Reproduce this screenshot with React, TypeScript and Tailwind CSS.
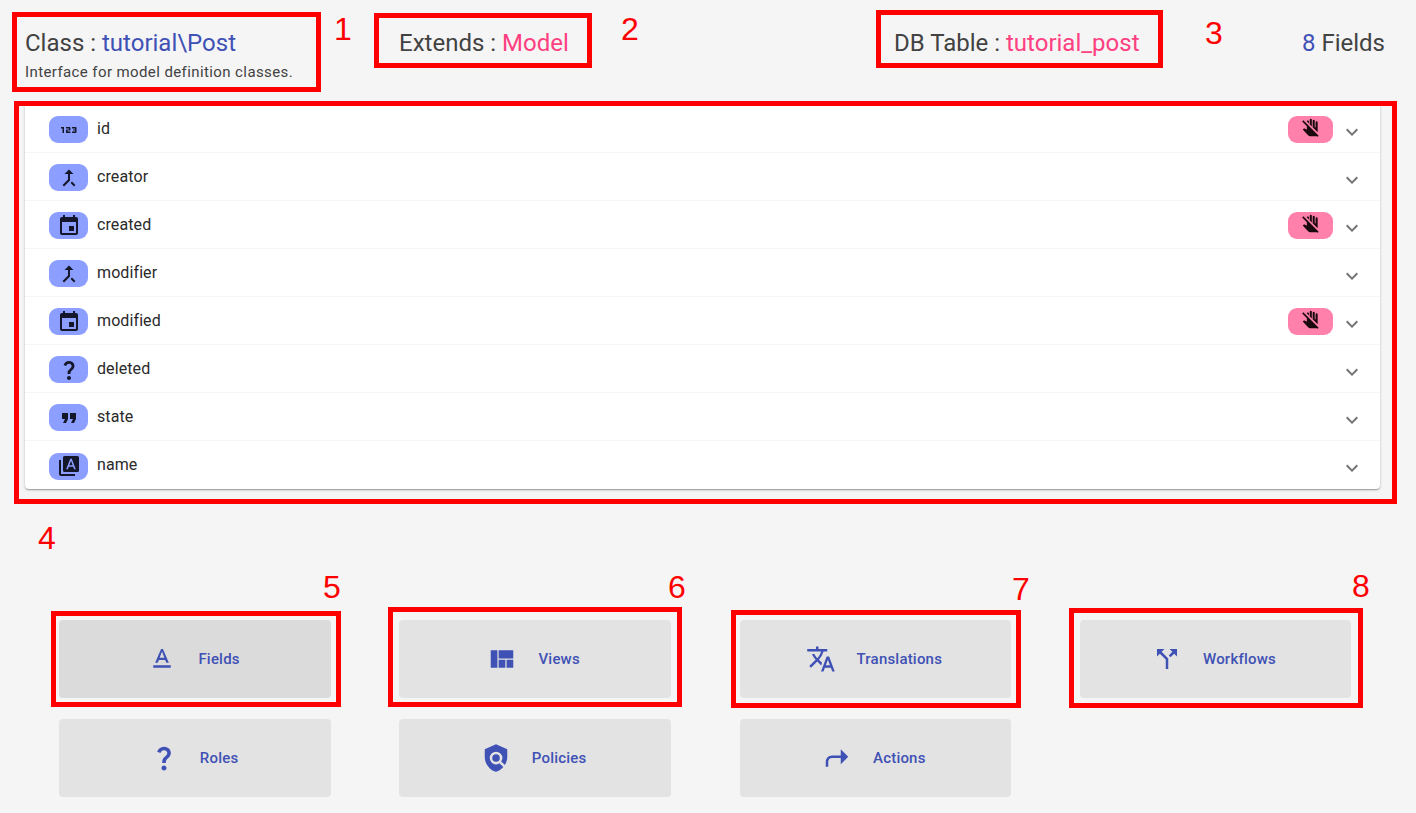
import type { ComponentType } from 'react'
import {
  Md123,
  MdCallMerge,
  MdCallSplit,
  MdDoNotTouch,
  MdEvent,
  MdFormatQuote,
  MdKeyboardArrowDown,
  MdPolicy,
  MdQuestionMark,
  MdShortcut,
  MdTextFormat,
  MdTranslate,
  MdViewQuilt,
} from 'react-icons/md'

type IconType = ComponentType<{ className?: string }>

// stacked "A" square used for the name field
function StackedFontIcon({ className }: { className?: string }) {
  return (
    <svg viewBox="0 0 24 24" fill="currentColor" className={className}>
      <path d="M4 6H2v14c0 1.1.9 2 2 2h14v-2H4V6z" />
      <g transform="translate(4.4 0.4) scale(0.8)">
        <path d="M9.93 13.5h4.14L12 7.98 9.93 13.5zM20 2H4c-1.1 0-2 .9-2 2v16c0 1.1.9 2 2 2h16c1.1 0 2-.9 2-2V4c0-1.1-.9-2-2-2zm-4.05 16.5-1.14-3H9.17l-1.12 3H5.96l5.11-13h1.87l5.11 13h-2.1z" />
      </g>
    </svg>
  )
}

const fields: { name: string; icon: IconType; locked?: boolean }[] = [
  { name: 'id', icon: Md123, locked: true },
  { name: 'creator', icon: MdCallMerge },
  { name: 'created', icon: MdEvent, locked: true },
  { name: 'modifier', icon: MdCallMerge },
  { name: 'modified', icon: MdEvent, locked: true },
  { name: 'deleted', icon: MdQuestionMark },
  { name: 'state', icon: MdFormatQuote },
  { name: 'name', icon: StackedFontIcon },
]

const tabs: { label: string; icon: IconType; active?: boolean }[] = [
  { label: 'Fields', icon: MdTextFormat, active: true },
  { label: 'Views', icon: MdViewQuilt },
  { label: 'Translations', icon: MdTranslate },
  { label: 'Workflows', icon: MdCallSplit },
  { label: 'Roles', icon: MdQuestionMark },
  { label: 'Policies', icon: MdPolicy },
  { label: 'Actions', icon: MdShortcut },
]

// red annotation boxes drawn on top of the screenshot
const markers = [
  'left-[12px] top-[12px] w-[309px] h-[80px]',
  'left-[374px] top-[13px] w-[218px] h-[55px]',
  'left-[876px] top-[10px] w-[287px] h-[58px]',
  'left-[14px] top-[101px] w-[1383px] h-[403px]',
  'left-[51px] top-[611px] w-[290px] h-[96px]',
  'left-[388px] top-[607px] w-[294px] h-[100px]',
  'left-[731px] top-[610px] w-[290px] h-[98px]',
  'left-[1069px] top-[608px] w-[294px] h-[100px]',
]

const numbers = [
  { n: '1', pos: 'left-[334px] top-[11px]' },
  { n: '2', pos: 'left-[621px] top-[11px]' },
  { n: '3', pos: 'left-[1205px] top-[15px]' },
  { n: '4', pos: 'left-[38px] top-[520px]' },
  { n: '5', pos: 'left-[323px] top-[569px]' },
  { n: '6', pos: 'left-[668px] top-[569px]' },
  { n: '7', pos: 'left-[1012px] top-[571px]' },
  { n: '8', pos: 'left-[1352px] top-[568px]' },
]

export default function App() {
  return (
    <div className="relative min-h-[813px] overflow-hidden bg-[#f5f5f5] font-['Roboto',sans-serif] text-[#424242]">
      {/* Header */}
      <div className="flex h-[105px] pt-[27px]">
        <div className="w-[399px] pl-[25px]">
          <div className="text-[24px] leading-[32px]">
            Class : <span className="text-[#3f51b5]">tutorial\Post</span>
          </div>
          <div className="mt-[3px] text-[15px] leading-[20px] tracking-[0.4px]">
            Interface for model definition classes.
          </div>
        </div>
        <div className="w-[495px] text-[24px] leading-[32px]">
          Extends : <span className="text-[#ff4081]">Model</span>
        </div>
        <div className="text-[24px] leading-[32px]">
          DB Table : <span className="text-[#ff4081]">tutorial_post</span>
        </div>
        <div className="ml-auto pr-[31px] text-[24px] leading-[32px]">
          <span className="text-[#3f51b5]">8</span> Fields
        </div>
      </div>

      {/* Field list */}
      <div className="ml-[25px] w-[1355px] rounded-b-[4px] bg-white shadow-[0_1px_3px_rgba(0,0,0,0.2),0_1px_1px_rgba(0,0,0,0.14),0_2px_1px_-1px_rgba(0,0,0,0.12)]">
        {fields.map((field) => {
          const Icon = field.icon
          return (
            <div
              key={field.name}
              className="flex h-[48px] items-center border-b border-[#f5f5f5] pl-[24px] pr-[16px] last:border-b-0"
            >
              <div className="mt-[2px] flex h-[27px] w-[39px] items-center justify-center rounded-[9px] bg-[#8c9eff] text-[#14162b]">
                <Icon className="h-[24px] w-[24px]" />
              </div>
              <span className="ml-[9px] text-[16px] tracking-[0.1px] text-[#2a2a2a]">{field.name}</span>
              <div className="ml-auto flex items-center">
                {field.locked && (
                  <div className="mr-[7px] mt-[2px] flex h-[27px] w-[45px] items-center justify-center rounded-[9px] bg-[#ff80ab] text-[#1a0a10]">
                    <MdDoNotTouch className="mb-[3px] h-[20px] w-[20px]" />
                  </div>
                )}
                <MdKeyboardArrowDown className="mt-[6px] h-[24px] w-[24px] text-[#757575]" />
              </div>
            </div>
          )
        })}
      </div>

      {/* Section buttons */}
      <div className="ml-[59.25px] mt-[131px] grid w-[1292px] grid-cols-4 gap-x-[68.5px] gap-y-[21px]">
        {tabs.map((tab) => {
          const Icon = tab.icon
          return (
            <div
              key={tab.label}
              className={`flex h-[78px] items-center justify-center rounded-[4px] text-[15px] font-medium tracking-[0.2px] text-[#3f51b5] ${
                tab.active ? 'bg-[#dbdbdb]' : 'bg-[#e3e3e3]'
              }`}
            >
              <Icon className="-ml-[3px] mr-[21px] h-[30px] w-[30px]" />
              <span>{tab.label}</span>
            </div>
          )
        })}
      </div>

      {/* Annotations */}
      {markers.map((pos) => (
        <div key={pos} className={`absolute border-[5px] border-[#ff0000] ${pos}`} />
      ))}
      {numbers.map((item) => (
        <span
          key={item.n}
          className={`absolute font-['Liberation_Sans',sans-serif] text-[32px] leading-[36px] text-[#ff0000] ${item.pos}`}
        >
          {item.n}
        </span>
      ))}
    </div>
  )
}
